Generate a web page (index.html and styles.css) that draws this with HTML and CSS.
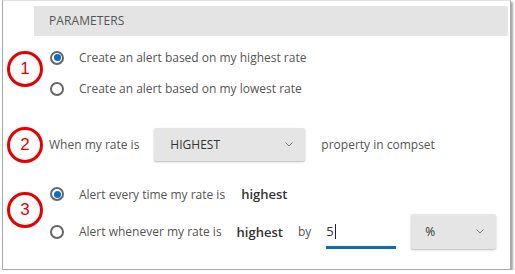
FILE: index.html
```html
<!DOCTYPE html>
<html>
<head>
<meta charset="utf-8">
<link rel="stylesheet" href="styles.css">
</head>
<body>
<div class="frame">
  <div class="header">PARAMETERS</div>

  <div class="section s1">
    <div class="marker m1">1</div>
    <div class="content">
      <label class="opt"><input type="radio" name="a" checked><span>Create an alert based on my highest rate</span></label>
      <label class="opt"><input type="radio" name="a"><span>Create an alert based on my lowest rate</span></label>
    </div>
  </div>

  <div class="section s2">
    <div class="marker m2">2</div>
    <div class="content row">
      <span class="txt">When my rate is</span>
      <div class="select sel-big"><span>HIGHEST</span><svg width="8" height="5" viewBox="0 0 8 5"><polyline points="0.5,0.5 4,4 7.5,0.5" fill="none" stroke="#777" stroke-width="1"/></svg></div>
      <span class="txt after">property in compset</span>
    </div>
  </div>

  <div class="section s3">
    <div class="marker m3">3</div>
    <div class="content">
      <label class="opt opt3a"><input type="radio" name="b" checked><span>Alert every time my rate is</span><b class="hl hl1">highest</b></label>
      <div class="opt opt3b">
        <input type="radio" name="b"><span>Alert whenever my rate is</span><b class="hl hl2">highest</b>
        <span class="by">by</span>
        <div class="num"><span>5</span><i class="caret"></i></div>
        <div class="select sel-small"><span>%</span><svg width="8" height="5" viewBox="0 0 8 5"><polyline points="0.5,0.5 4,4 7.5,0.5" fill="none" stroke="#777" stroke-width="1"/></svg></div>
      </div>
    </div>
  </div>
</div>
</body>
</html>
```

FILE: styles.css
```css
* { box-sizing: border-box; }
html, body { margin: 0; padding: 0; background: #fff; }
body { font-family: "Open Sans", "Liberation Sans", sans-serif; color: #555; font-size: 12px; }

.frame {
  margin-left: 2px;
  width: 509px;
  height: 270px;
  border: 1px solid #a8a8a8;
  border-top-color: #e0e0e0;
  box-shadow: 2px 2px 2px rgba(0,0,0,0.35);
  padding: 5px 2px 0 31px;
  position: relative;
}
.header {
  height: 30px;
  line-height: 30px;
  background: #e4e4e4;
  padding-left: 15px;
  font-size: 12px;
  color: #555;
  letter-spacing: 0.1px;
}

.section {
  display: flex;
  margin-left: -31px;
}
.marker {
  flex: none;
  width: 36px;
  height: 36px;
  margin-left: 4px;
  border: 3px solid #e60000;
  border-radius: 50%;
  color: #e60000;
  font-family: "Liberation Sans", Arial, sans-serif;
  font-size: 17px;
  display: flex;
  align-items: center;
  justify-content: center;
}
.content { margin-left: 6px; }

.s1 { margin-top: 6px; }
.m1 { margin-top: 9px; }
.s2 { margin-top: 0; padding-top: 24px; }
.m2 { margin-top: -1px; }
.s3 { margin-top: 13px; }
.m3 { margin-top: 16px; }

.opt {
  display: flex;
  align-items: center;
  height: 31px;
}
.opt input {
  appearance: none;
  -webkit-appearance: none;
  margin: 0 15px 0 1px;
  width: 14px;
  height: 14px;
  border: 2px solid #666;
  border-radius: 50%;
  background: #fff;
  flex: none;
  position: relative;
}
.opt input:checked::after {
  content: "";
  position: absolute;
  left: 1.5px;
  top: 1.5px;
  width: 7px;
  height: 7px;
  border-radius: 50%;
  background: #0a6ebd;
}
.opt3a { height: 36px; }
.opt3b { height: 35px; margin-top: 2px; }

.hl { font-weight: 600; color: #333; font-size: 13px; }
.hl1 { margin-left: 16px; }
.hl2 { margin-left: 15px; }
.by { margin-left: 15px; }

.row { display: flex; align-items: center; height: 33px; }
.txt { margin-left: 0; }
.after { margin-left: 16px; }

.select {
  display: flex;
  align-items: center;
  justify-content: space-between;
  background: #e5e5e5;
  border-radius: 2px;
  box-shadow: 0 1px 2px rgba(0,0,0,0.28);
  color: #333;
}
.sel-big { width: 151px; height: 33px; margin-left: 15px; padding: 0 12px 0 16px; }
.sel-small { width: 85px; height: 35px; margin-left: 15px; padding: 0 12px 0 14px; }

.num {
  width: 70px;
  height: 35px;
  margin-left: 15px;
  border-bottom: 3px solid #0a6ebd;
  display: flex;
  align-items: center;
  color: #333;
  font-size: 13px;
  padding-top: 2px;
}
.caret {
  display: inline-block;
  width: 1px;
  height: 15px;
  background: #222;
  margin-left: 1px;
}
```
